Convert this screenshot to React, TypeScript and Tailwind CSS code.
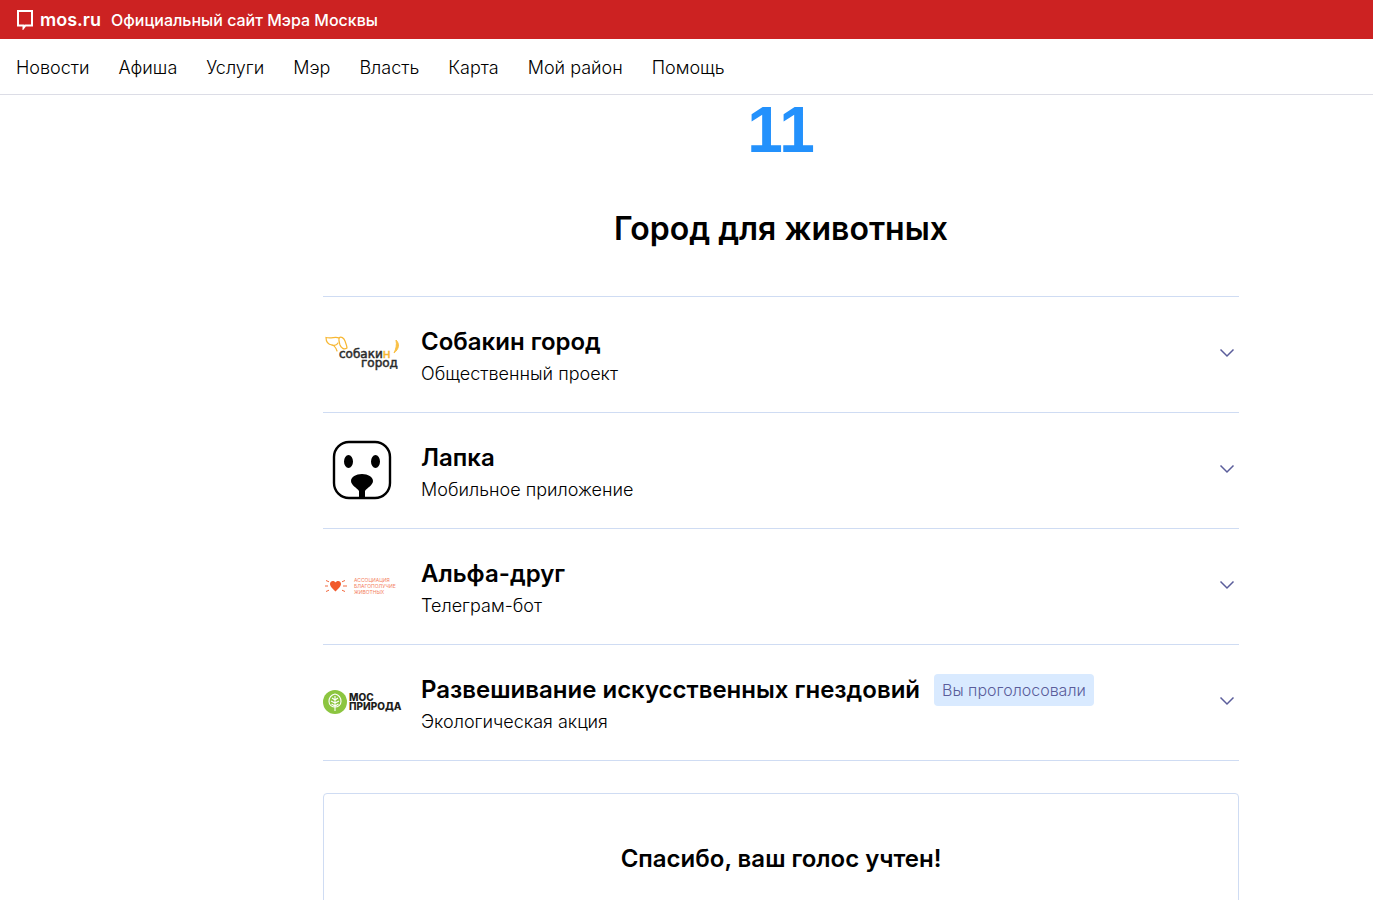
import React, { useState } from "react";
import clsx from "clsx";

const menu = [
  "Новости",
  "Афиша",
  "Услуги",
  "Мэр",
  "Власть",
  "Карта",
  "Мой район",
  "Помощь",
];

function SobakinLogo() {
  return (
    <svg viewBox="0 0 78 44" className="w-full font-['DejaVu_Sans',sans-serif]" aria-hidden="true">
      <g fill="none" stroke="#f7b733" strokeWidth="1.200" strokeLinecap="round">
        <path d="M16 6c-4-2-7 1-13-.500c0 4 2 7 6 7.500c3 .500 4 3 5 6" />
        <path d="M16 6c2-2 5 0 6 3c1 3 2 5 2 7c-3 2-6 0-7-3c-.500-2-1.500-4-1-7z" />
        <path d="M9 13c3 1 5 0 6-2" />
      </g>
      <path d="M73 8c4 4 3 9-2 13c2-4 3-8 2-13z" fill="#f9c044" stroke="#f9c044" strokeWidth="1" />
      <text x="16" y="26" fill="#2b2b2b" stroke="#2b2b2b" strokeWidth=".5" fontSize="12">
        собаки
        <tspan fill="#f7b733" stroke="#f7b733">
          н
        </tspan>
      </text>
      <text x="38" y="35" fill="#2b2b2b" stroke="#2b2b2b" strokeWidth=".5" fontSize="12">
        город
      </text>
    </svg>
  );
}

function LapkaLogo() {
  return (
    <svg viewBox="0 0 78 78" className="w-full" aria-hidden="true">
      <rect x="11" y="11" width="56" height="56" rx="15" fill="#fff" stroke="#000" strokeWidth="2.400" />
      <ellipse cx="25.500" cy="30.500" rx="4.500" ry="6.500" />
      <ellipse cx="52.500" cy="30.500" rx="4.500" ry="6.500" />
      <path d="M28 50c0-4 5-7 11-7s11 3 11 7c0 4-6 7-8 10v7h-6v-7c-2-3-8-6-8-10z" />
    </svg>
  );
}

function AlfaLogo() {
  return (
    <svg viewBox="0 0 78 24" className="w-full" aria-hidden="true">
      <path
        d="M12.500 17.500C8 13.500 7 11.500 7 9.800c0-3 4-4 5.500-1.300C14 5.800 18 6.800 18 9.800c0 1.700-1 3.700-5.500 7.700z"
        fill="#f15a2b"
      />
      <path
        d="M2 12h3M20 12h4M3 6.500l3 1.300M19 7.800l3-1.300M3 17.500l3-1.300M19 16.200l3 1.300"
        stroke="#f26a40"
        strokeWidth="1"
      />
      <g fill="#f4835f" fontSize="5">
        <text x="31" y="8">АССОЦИАЦИЯ</text>
        <text x="31" y="14">БЛАГОПОЛУЧИЕ</text>
        <text x="31" y="20">ЖИВОТНЫХ</text>
      </g>
    </svg>
  );
}

function MosprirodaLogo() {
  return (
    <svg viewBox="0 0 78 24" className="w-full overflow-visible" aria-hidden="true">
      <circle cx="12" cy="12" r="12" fill="#8cc540" />
      <g fill="none" stroke="#fff" strokeWidth="1.100">
        <path d="M12 4c-4 1-6 4-6 7.500s3 5.500 6 5.500s6-2 6-5.500s-2-6.500-6-7.500z" />
        <path d="M12 6v15M12 10l-3-2M12 10l3-2M12 13l-4-2M12 13l4-2M12 16l-3.500-2M12 16l3.500-2" />
      </g>
      <g fill="#1d1d1b" fontSize="10" className="font-extrabold">
        <text x="26" y="11">МОС</text>
        <text x="26" y="20">ПРИРОДА</text>
      </g>
    </svg>
  );
}

const projects = [
  { title: "Собакин город", type: "Общественный проект", Logo: SobakinLogo },
  { title: "Лапка", type: "Мобильное приложение", Logo: LapkaLogo },
  { title: "Альфа-друг", type: "Телеграм-бот", Logo: AlfaLogo },
  {
    title: "Развешивание искусственных гнездовий",
    type: "Экологическая акция",
    Logo: MosprirodaLogo,
    voted: true,
  },
];

function Header() {
  return (
    <header>
      <div className="flex h-[39px] items-center gap-2.5 bg-[#cc2222] px-4 text-white">
        <a href="#" className="flex items-center gap-1.5 text-lg font-semibold">
          <svg width="18" height="21" viewBox="0 0 18 21" fill="none" aria-hidden="true">
            <path d="M2 2h14v14.500H9.500L7.500 19v-2.500H2z" stroke="#fff" strokeWidth="2" />
          </svg>
          mos.ru
        </a>
        <span className="font-medium">Официальный сайт Мэра Москвы</span>
      </div>
      <nav className="flex h-14 items-center gap-[29px] border-b border-[#dcdde6] px-4 pt-0.5 text-lg font-light">
        {menu.map((item) => (
          <a key={item} href="#">
            {item}
          </a>
        ))}
      </nav>
    </header>
  );
}

function ProjectRow({ project }: { project: (typeof projects)[number] }) {
  const [open, setOpen] = useState(false);
  const { title, type, Logo, voted } = project;

  return (
    <li className="border-b border-[#cfdcf3]">
      <button
        type="button"
        aria-expanded={open}
        onClick={() => setOpen(!open)}
        className="flex h-[115px] w-full items-center text-left"
      >
        <span className="mb-0.5 flex w-[78px] shrink-0 items-center">
          <Logo />
        </span>
        <span className="ml-5 flex flex-1 flex-col pt-1.5">
          <span className="flex items-center gap-3.5">
            <span className="text-2xl font-semibold">{title}</span>
            {voted && (
              <span className="rounded bg-[#d9eaff] px-2 leading-8 font-light text-[#5a5d9b]">
                Вы проголосовали
              </span>
            )}
          </span>
          <span className="text-lg leading-8 font-light">{type}</span>
        </span>
        <svg
          width="16"
          height="10"
          viewBox="0 0 16 10"
          fill="none"
          className={clsx("mr-1 mb-1 shrink-0", open && "rotate-180")}
          aria-hidden="true"
        >
          <path d="M1.500 1.500L8 8l6.500-6.500" stroke="#5a5d9b" strokeWidth="1.500" />
        </svg>
      </button>
    </li>
  );
}

export default function App() {
  return (
    <div className="h-screen overflow-hidden bg-white font-['Inter',sans-serif] text-black">
      <Header />
      <main className="mx-auto max-w-[1105px] pl-[189px]">
        <p className="pt-[3px] text-center font-['Liberation_Sans',sans-serif] text-[64px] leading-[64px] font-bold text-[#2391fc]">
          11
        </p>
        <h2 className="mt-[45px] text-center text-[32px] leading-[44px] font-semibold">
          Город для животных
        </h2>
        <ul className="mt-[45px] border-t border-[#cfdcf3]">
          {projects.map((project) => (
            <ProjectRow key={project.title} project={project} />
          ))}
        </ul>
        <section className="mt-8 rounded border border-[#cfdcf3] px-8 py-[49px]">
          <h3 className="text-center text-2xl font-semibold">Спасибо, ваш голос учтен!</h3>
          <div className="h-24" />
        </section>
      </main>
    </div>
  );
}
